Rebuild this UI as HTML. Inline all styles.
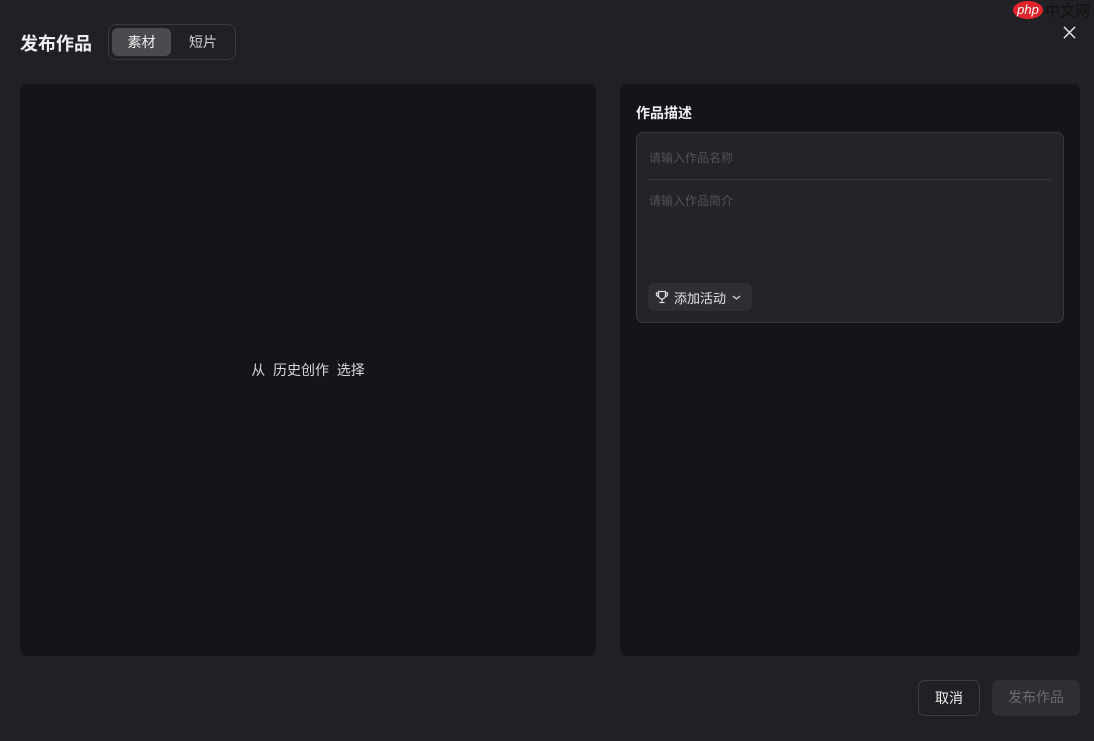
<!DOCTYPE html>
<html><head><meta charset="utf-8"><style>
*{margin:0;padding:0;box-sizing:border-box}
body{width:1094px;height:741px;background:#202124;font-family:"Liberation Sans","Noto Sans CJK SC",sans-serif;color:#e8e8ea;position:relative;overflow:hidden}
.abs{position:absolute}
.title{left:20px;top:30px;font-size:18px;font-weight:bold;color:#f0f0f2}
.seg{left:108px;top:24px;width:128px;height:36px;border:1px solid #3a3b3f;border-radius:8px}
.seg .a{position:absolute;left:3px;top:3px;width:59px;height:28px;background:#4a4b4f;border-radius:6px;text-align:center;line-height:28px;font-size:14px;color:#f0f0f0}
.seg .b{position:absolute;left:64px;top:3px;width:60px;height:28px;text-align:center;line-height:28px;font-size:14px;color:#d0d0d4}
.left{left:20px;top:84px;width:576px;height:572px;background:#141518;border-radius:6px}
.left span{position:absolute;left:0;right:0;top:276px;text-align:center;font-size:14px;color:#d8d8da}
.right{left:620px;top:84px;width:460px;height:572px;background:#141518;border-radius:6px}
.box{left:636px;top:132px;width:428px;height:191px;border:1px solid #38393d;border-radius:7px;background:#232427}
.ph{font-size:12px;color:#515257}
.btn{border-radius:7px;text-align:center;font-size:14px;line-height:34px;height:36px}
</style></head><body>
<div class="abs title">发布作品</div>
<div class="abs seg"><div class="a">素材</div><div class="b">短片</div></div>
<div class="abs" style="left:1013px;top:1px;width:30px;height:18px;background:#e0242b;border-radius:50%;color:#fff;font-size:13px;font-style:italic;text-align:center;line-height:18px">php</div>
<div class="abs" style="left:1045px;top:0px;font-size:15px;color:#111">中文网</div>
<svg class="abs" style="left:1063px;top:26px" width="13" height="13" viewBox="0 0 14 14"><path d="M1 1L13 13M13 1L1 13" stroke="#eee" stroke-width="1.5"/></svg>
<div class="abs left"><span>从&nbsp; 历史创作&nbsp; 选择</span></div>
<div class="abs right"></div>
<div class="abs" style="left:636px;top:103px;font-size:14px;font-weight:bold;color:#f0f0f2">作品描述</div>
<div class="abs box"></div>
<div class="abs ph" style="left:649px;top:149px">请输入作品名称</div>
<div class="abs" style="left:649px;top:179px;width:402px;height:1px;background:#3a3b3f"></div>
<div class="abs ph" style="left:649px;top:192px">请输入作品简介</div>
<div class="abs" style="left:648px;top:283px;width:104px;height:28px;background:#2e2f33;border-radius:7px"></div>
<svg class="abs" style="left:655px;top:290px" width="14" height="14" viewBox="0 0 14 14" fill="none" stroke="#ddd" stroke-width="1.3"><path d="M3.5 1.5h7v4a3.5 3.5 0 0 1-7 0z M3.5 3H1.5v1.5a2 2 0 0 0 2 2 M10.5 3h2v1.5a2 2 0 0 1-2 2 M7 9v2.5 M4.5 12.5h5"/></svg>
<div class="abs" style="left:674px;top:288px;font-size:13px;color:#e4e4e6">添加活动</div>
<svg class="abs" style="left:732px;top:294px" width="9" height="7" viewBox="0 0 9 7"><path d="M1 2l3.5 3L8 2" stroke="#ddd" stroke-width="1.2" fill="none"/></svg>
<div class="abs btn" style="left:918px;top:680px;width:62px;border:1px solid #3e3f43;color:#eee">取消</div>
<div class="abs btn" style="left:992px;top:680px;width:88px;background:#2e2f33;color:#6a6b70">发布作品</div>
</body></html>
